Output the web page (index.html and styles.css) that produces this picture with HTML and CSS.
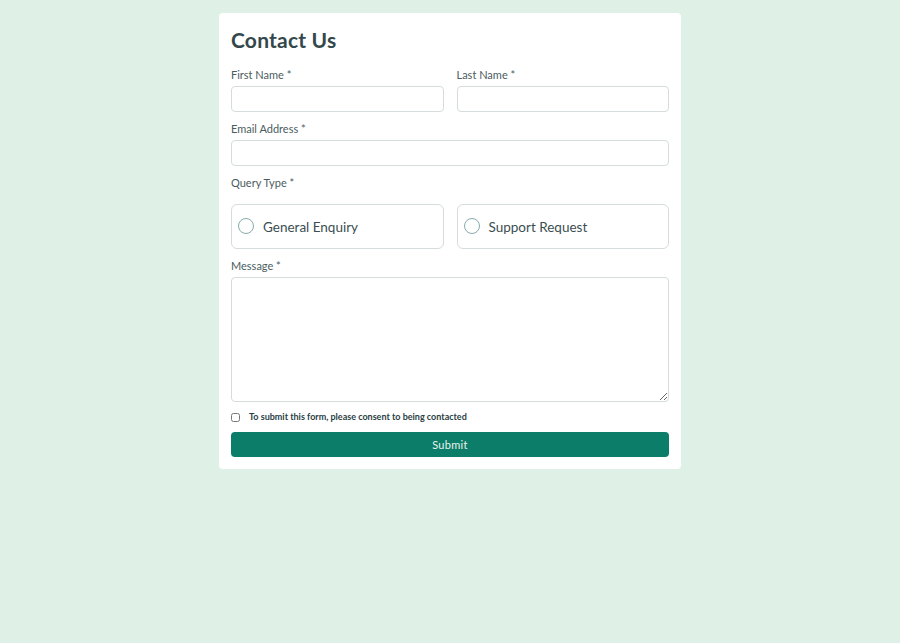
FILE: index.html
```html
<!DOCTYPE html>
<html>
<head>
    <title>Contact Us</title>
    <meta charset="utf-8">
    <link rel="stylesheet" href="styles.css">
</head>
<body>
    <div class="card">
        <h1>Contact Us</h1>
        <form id="contactForm">
            <div class="row">
                <div class="form-group">
                    <label for="first_name">First Name <span class="req">*</span></label>
                    <input type="text" id="first_name">
                </div>
                <div class="form-group">
                    <label for="last_name">Last Name <span class="req">*</span></label>
                    <input type="text" id="last_name">
                </div>
            </div>
            <div class="form-group">
                <label for="email">Email Address <span class="req">*</span></label>
                <input type="text" id="email">
            </div>
            <div class="form-group">
                <label>Query Type <span class="req">*</span></label>
                <div class="row radios">
                    <label class="radio-box"><span class="radio"></span>General Enquiry</label>
                    <label class="radio-box"><span class="radio"></span>Support Request</label>
                </div>
            </div>
            <div class="form-group">
                <label for="message">Message <span class="req">*</span></label>
                <textarea id="message"></textarea>
            </div>
            <label class="consent"><input type="checkbox"> To submit this form, please consent to being contacted</label>
            <button type="button">Submit</button>
        </form>
    </div>
</body>
</html>
```
FILE: styles.css
```css
body {
    font-family: Lato, "Liberation Sans", sans-serif;
    margin: 0;
    padding: 13px 0;
    background-color: #dff0e6;
    color: #2a4144;
}
.card {
    width: 438px;
    margin: 0 auto;
    background-color: white;
    padding: 12px;
    border-radius: 4px;
}
h1 {
    font-size: 21px;
    line-height: 26px;
    font-weight: 700;
    margin: 2px 0 15px;
    letter-spacing: 0.2px;
    color: #34484b;
}
.row {
    display: grid;
    grid-template-columns: 1fr 1fr;
    gap: 13px;
}
.form-group {
    margin-bottom: 10px;
}
label {
    display: block;
    font-size: 11px;
    line-height: 14px;
    margin-bottom: 4px;
    color: #4a5d60;
}
input[type="text"],
textarea {
    display: block;
    width: 100%;
    height: 26px;
    border: 1px solid #d5dcdd;
    border-radius: 4px;
    box-sizing: border-box;
    margin: 0;
}
textarea {
    height: 125px;
    resize: vertical;
}
.radios {
    margin-top: 14px;
}
.radio-box {
    display: flex;
    align-items: center;
    height: 45px;
    box-sizing: border-box;
    border: 1px solid #d5dcdd;
    border-radius: 6px;
    padding: 0 6px;
    font-size: 13.5px;
    line-height: 16px;
    color: #3a4e51;
    margin: 0;
}
.radio {
    width: 14px;
    height: 14px;
    border: 1.5px solid #87a9ab;
    border-radius: 50%;
    margin-right: 9px;
    position: relative;
    top: -1px;
}
.consent {
    display: flex;
    align-items: center;
    font-size: 9px;
    font-weight: 700;
    color: #2a4144;
    margin: -2px 0 8px;
}
.consent input {
    width: 9px;
    height: 9px;
    margin: 0 9px 0 0;
}
button {
    display: block;
    width: 100%;
    height: 25px;
    background-color: #0c7d69;
    color: #e8f3ef;
    border: none;
    border-radius: 4px;
    font-family: inherit;
    font-size: 11px;
    letter-spacing: 0.3px;
    cursor: pointer;
}
```
